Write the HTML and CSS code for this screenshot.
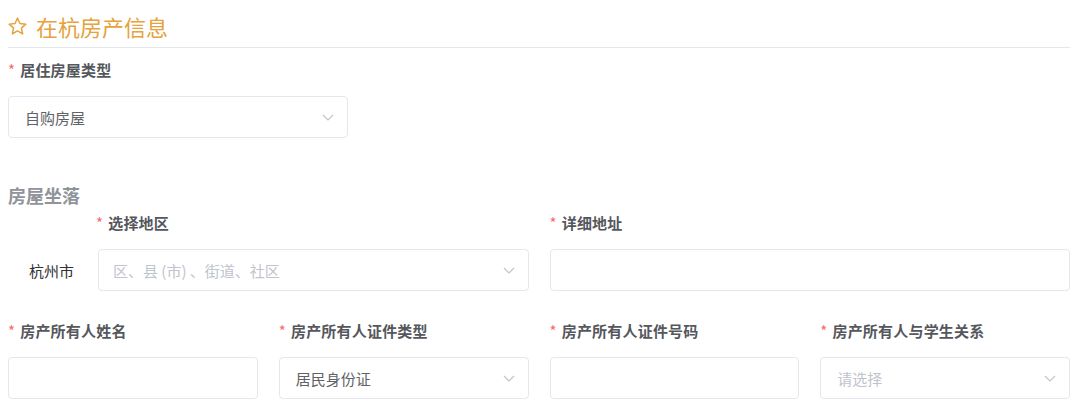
FILE: index.html
```html
<!DOCTYPE html>
<html lang="zh-CN">
<head>
<meta charset="utf-8">
<title>在杭房产信息</title>
<link rel="stylesheet" href="styles.css">
</head>
<body>
<div class="page">
  <div class="section-title">
    <svg class="star" viewBox="0 0 24 24" width="21" height="21" aria-hidden="true">
      <path d="M12 2.4l2.8 6.2 6.7.7-5 4.5 1.4 6.7L12 17.1l-5.9 3.4 1.4-6.7-5-4.5 6.7-.7z" fill="none" stroke="#E6A23C" stroke-width="1.7" stroke-linejoin="round"/>
    </svg>
    <span>在杭房产信息</span>
  </div>

  <div class="item item-first">
    <div class="label"><span class="req">*</span>居住房屋类型</div>
    <div class="control select w-340">
      <span class="value">自购房屋</span>
      <svg class="chev" viewBox="0 0 12 7" width="12" height="7"><polyline points="1,1 6,6 11,1" fill="none" stroke="#C0C4CC" stroke-width="1.2"/></svg>
    </div>
  </div>

  <div class="group-title">房屋坐落</div>
  <div class="grid2">
    <div class="item">
      <div class="label indent"><span class="req">*</span>选择地区</div>
      <div class="with-prefix">
        <div class="prefix">杭州市</div>
        <div class="control select grow">
          <span class="placeholder">区、县 (市) 、街道、社区</span>
          <svg class="chev" viewBox="0 0 12 7" width="12" height="7"><polyline points="1,1 6,6 11,1" fill="none" stroke="#C0C4CC" stroke-width="1.2"/></svg>
        </div>
      </div>
    </div>
    <div class="item">
      <div class="label"><span class="req">*</span>详细地址</div>
      <div class="control"></div>
    </div>
  </div>

  <div class="grid4">
    <div class="item">
      <div class="label"><span class="req">*</span>房产所有人姓名</div>
      <div class="control"></div>
    </div>
    <div class="item">
      <div class="label"><span class="req">*</span>房产所有人证件类型</div>
      <div class="control select">
        <span class="value">居民身份证</span>
        <svg class="chev" viewBox="0 0 12 7" width="12" height="7"><polyline points="1,1 6,6 11,1" fill="none" stroke="#C0C4CC" stroke-width="1.2"/></svg>
      </div>
    </div>
    <div class="item">
      <div class="label"><span class="req">*</span>房产所有人证件号码</div>
      <div class="control"></div>
    </div>
    <div class="item">
      <div class="label"><span class="req">*</span>房产所有人与学生关系</div>
      <div class="control select">
        <span class="placeholder">请选择</span>
        <svg class="chev" viewBox="0 0 12 7" width="12" height="7"><polyline points="1,1 6,6 11,1" fill="none" stroke="#C0C4CC" stroke-width="1.2"/></svg>
      </div>
    </div>
  </div>
</div>
</body>
</html>
```

FILE: styles.css
```css
* { box-sizing: border-box; }
html, body { margin: 0; padding: 0; background: #fff; }
body {
  font-family: "Noto Sans CJK SC", "Noto Sans", "Liberation Sans", sans-serif;
  color: #606266;
}
.page {
  width: 1062px;
  margin-left: 8px;
}
.section-title {
  display: flex;
  align-items: center;
  gap: 8px;
  padding-top: 11px;
  padding-bottom: 6px;
  height: 48px;
  border-bottom: 1px solid #E4E7ED;
  color: #E6A23C;
  font-size: 22px;
  line-height: 30px;
}
.star { flex: none; margin-left: -1px; }
.item { display: flex; flex-direction: column; }
.item-first { margin-top: 12px; }
.label {
  font-size: 15px;
  font-weight: 700;
  line-height: 20px;
  color: #55575c;
  margin-bottom: 16px;
  white-space: nowrap;
  letter-spacing: 0.2px;
}
.label.indent { padding-left: 88px; }
.req {
  color: #F56C6C;
  font-weight: 400;
  margin-right: 5px;
}
.control {
  height: 42px;
  border: 1px solid #E4E7ED;
  border-radius: 4px;
  background: #fff;
  display: flex;
  align-items: center;
  padding: 0 13px 0 16px;
  font-size: 15px;
}
.w-340 { width: 340px; }
.select { justify-content: space-between; }
.value { color: #606266; }
.placeholder { color: #C0C4CC; }
.chev { flex: none; }
.group-title {
  margin-top: 45px;
  font-size: 18px;
  font-weight: 700;
  line-height: 24px;
  color: #909399;
  margin-bottom: 6px;
}
.grid2 {
  display: grid;
  grid-template-columns: 1fr 1fr;
  column-gap: 21px;
}
.with-prefix { display: flex; align-items: center; }
.prefix {
  width: 90px;
  flex: none;
  text-align: right;
  padding-right: 24px;
  font-size: 15px;
  color: #303133;
}
.grow { flex: 1; padding-left: 14px; }
.grid4 {
  margin-top: 30px;
  display: grid;
  grid-template-columns: repeat(4, 1fr);
  column-gap: 21px;
}
```
